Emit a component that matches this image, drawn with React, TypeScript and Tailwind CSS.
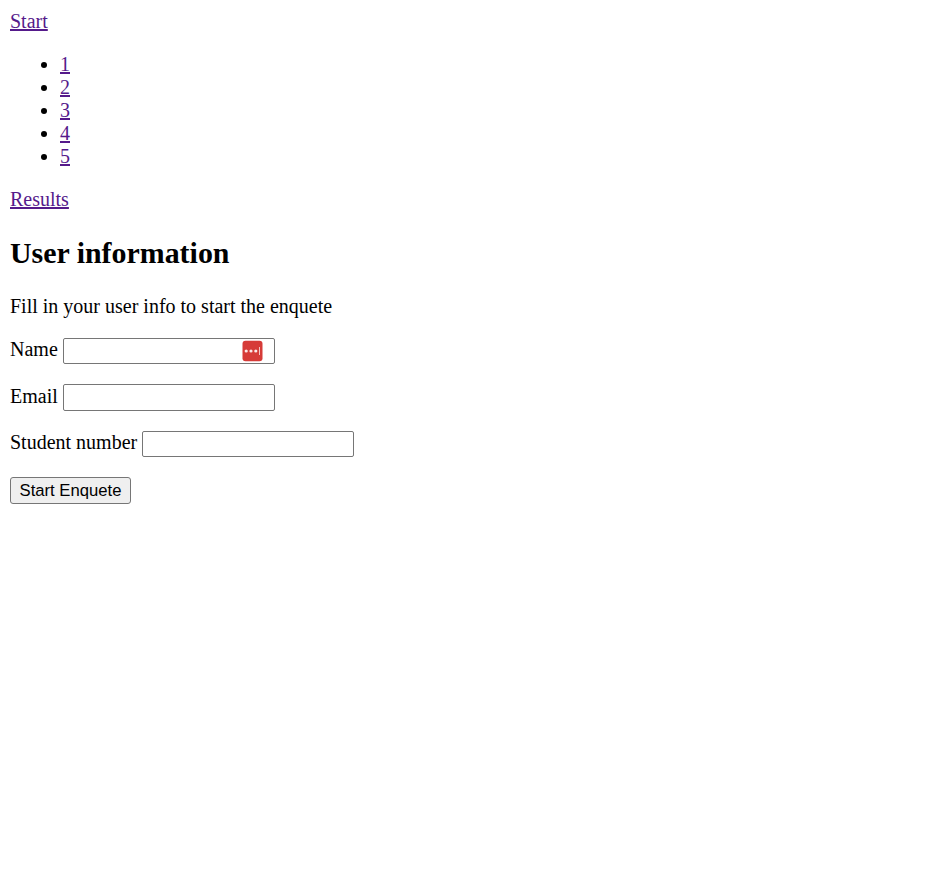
const fieldClass =
  "w-[212px] rounded-[2px] border border-[#767676] bg-white px-1 font-['Liberation_Sans',Arial,sans-serif] text-[16.67px] outline-none";

const linkClass = "text-[#551a8b] underline decoration-[2px] underline-offset-[1px]";

export default function App() {
  return (
    <main className="min-h-screen bg-white px-[10px] pt-[10px] font-['Liberation_Serif','Times_New_Roman',serif] text-[20px] leading-[23px] text-black">
      <nav>
        <a className={linkClass} href="#start">Start</a>
        <ul className="my-[20px] list-disc pl-[50px]">
          {[1, 2, 3, 4, 5].map((n) => (
            <li key={n}>
              <a className={linkClass} href={`#${n}`}>{n}</a>
            </li>
          ))}
        </ul>
        <a className={linkClass} href="#results">Results</a>
      </nav>
      <h2 className="mt-[25px] text-[29.9px] leading-[34px] font-bold">User information</h2>
      <p className="mt-[25px]">Fill in your user info to start the enquete</p>
      <form className="mt-[20px] flex flex-col items-start gap-[20px]">
        <label className="flex h-[26px] items-start gap-[5px]">
          Name
          <span className="relative flex">
            <input className={`h-[26px] ${fieldClass}`} />
            <svg className="absolute top-[2px] left-[179px]" width="21" height="22" viewBox="0 0 21 22">
              <rect x="0.5" y="0.7" width="20" height="20.6" rx="3" fill="#d63b38" />
              <circle cx="4.2" cy="11" r="1.6" fill="#fbe9e8" />
              <circle cx="9" cy="11" r="1.6" fill="#fbe9e8" />
              <circle cx="13.8" cy="11" r="1.6" fill="#fbe9e8" />
              <rect x="17" y="7" width="1" height="8" fill="#f4c4c2" />
            </svg>
          </span>
        </label>
        <label className="flex h-[27px] items-start gap-[5px]">
          <span className="pt-px">Email</span>
          <input className={`h-[27px] ${fieldClass}`} />
        </label>
        <label className="flex h-[26px] items-start gap-[5px]">
          Student number
          <input className={`h-[26px] ${fieldClass}`} />
        </label>
        <button
          type="button"
          className="h-[27px] w-[121px] rounded-[3px] border border-[#767676] bg-[#efefef] font-['Liberation_Sans',Arial,sans-serif] text-[16.67px] leading-[19px] whitespace-nowrap"
        >
          Start Enquete
        </button>
      </form>
    </main>
  );
}
